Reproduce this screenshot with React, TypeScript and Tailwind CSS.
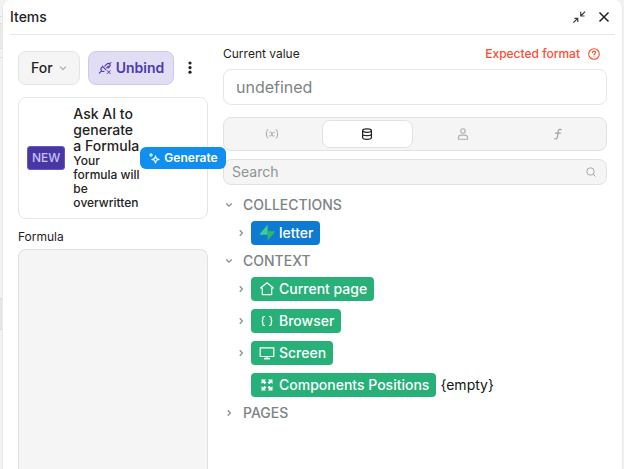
import type { ReactNode } from "react";

function Chevron({ open = false }: { open?: boolean }) {
  return (
    <svg viewBox="0 0 8 8" className="size-2 shrink-0" fill="none" stroke="#8b9292" strokeWidth="1.3">
      <path d={open ? "M1.2 2.6 4 5.2l2.8-2.6" : "M2.8 1.2 5.4 4 2.8 6.8"} />
    </svg>
  );
}

function UnplugIcon() {
  return (
    <svg viewBox="0 0 14 14" className="size-3.5" fill="none" stroke="#4d3aae" strokeWidth="1.1" strokeLinecap="round" strokeLinejoin="round">
      <path d="M1.300 12.200 3.600 9.800M6 10.200c-.9.500-1.700.3-2.400-.4-.9-.9-.9-2.200 0-3.100l1.200-1.100M4.300 5.100l3.500 3.500M6.800 5.200l1.700-1.800M8.700 7l1.700-1.800M7.800 4.100l1-1c.8-.8 2-.9 2.800-.1s.7 2-.1 2.800l-1 1M11.700 2.900l1.200-1.400" />
      <path d="m9.200 9.600 3 3m0-3-3 3" strokeWidth="1" />
    </svg>
  );
}

function SparkIcon() {
  return (
    <svg viewBox="0 0 12 12" className="size-3" fill="none" stroke="#fff" strokeWidth="1.1" strokeLinejoin="round">
      <path d="M7.500 3.800 8.400 6.500l2.700.9-2.700.9-.9 2.800-.9-2.800-2.700-.9 2.700-.9zM3 1v4M1 3h4" />
    </svg>
  );
}

function BoltIcon() {
  return (
    <svg viewBox="0 0 14 14" className="size-4">
      <path d="M8.300.7v4.800H13c.6 0 .8.6.5 1L7.600 13.500V8.600z" fill="#249361" />
      <path d="M7.600.5v8.100H1.300c-.6 0-.8-.6-.5-1L6.700.6c.3-.4.9-.5.9-.1z" fill="#3ecf8e" />
      <path d="M7.600 5.500H13c.6 0 .8.6.5 1L7.600 13.500z" fill="#2fb577" />
    </svg>
  );
}

function HomeIcon() {
  return (
    <svg viewBox="0 0 16 16" className="size-4" fill="none" stroke="#fff" strokeWidth="1.2" strokeLinejoin="round">
      <path d="M8 1.800 14.400 7h-1.700v6.600H3.300V7H1.600z" />
    </svg>
  );
}

function BracesIcon() {
  return (
    <svg viewBox="0 0 16 16" className="size-4" fill="none" stroke="#fff" strokeWidth="1.2" strokeLinecap="round">
      <path d="M5.500 3.500c-1.300 0-1.700.5-1.700 1.600v1.300c0 .9-.4 1.600-1.200 1.600.8 0 1.200.7 1.200 1.600v1.300c0 1.100.4 1.600 1.700 1.600M10.500 3.500c1.300 0 1.700.5 1.700 1.600v1.300c0 .9.4 1.600 1.200 1.600-.8 0-1.200.7-1.200 1.600v1.300c0 1.100-.4 1.600-1.700 1.600" />
    </svg>
  );
}

function ScreenIcon() {
  return (
    <svg viewBox="0 0 16 16" className="size-4" fill="none" stroke="#fff" strokeWidth="1.200">
      <path d="M1.200 2.800h13.600v8.700H1.200zM8 11.500v2" />
      <path d="M5 13.600h6" strokeWidth="1.600" />
    </svg>
  );
}

function ExpandIcon() {
  return (
    <svg viewBox="0 0 16 16" className="size-4" fill="#fff">
      <path d="M2.500 2.500h4.500L5.700 3.800l1.700 1.700-1.700 1.700-1.800-1.800L2.500 7zM13.500 2.500H9l1.300 1.300-1.700 1.700 1.700 1.700 1.800-1.800L13.500 7zM2.500 13.500H7l-1.300-1.300 1.700-1.700-1.700-1.700-1.800 1.800L2.500 9zM13.500 13.500H9l1.300-1.300-1.700-1.700 1.700-1.700 1.800 1.800L13.500 9z" />
    </svg>
  );
}

function DatabaseIcon() {
  return (
    <svg viewBox="0 0 12 12" className="size-3" fill="none" stroke="#1e2323" strokeWidth="1.200">
      <ellipse cx="6" cy="2.600" rx="4.400" ry="1.800" />
      <path d="M1.600 2.600v6.900c0 .9 2 1.800 4.400 1.800s4.400-.9 4.400-1.800V2.600M1.600 6c0 .9 2 1.600 4.400 1.600s4.400-.7 4.400-1.600" />
    </svg>
  );
}

function UserIcon() {
  return (
    <svg viewBox="0 0 12 12" className="size-3" fill="none" stroke="#aab0b0" strokeWidth="1.100" strokeLinejoin="round">
      <circle cx="6" cy="3" r="2.200" />
      <path d="M1.500 11.200V9.600c0-1.600 1.200-2.500 2.800-2.500h3.400c1.600 0 2.800.9 2.800 2.500v1.600z" />
    </svg>
  );
}

function VariableIcon() {
  return (
    <svg viewBox="0 0 14 12" className="h-3 w-3.5" fill="none" stroke="#9da3a3" strokeWidth="1" strokeLinecap="round">
      <path d="M2.700 1.500C.9 4 .9 7.700 2.700 10.200M11.300 1.500c1.800 2.500 1.800 6.200 0 8.700M4.800 4.200c1-.6 1.700-.2 2 1.200l.4 1.700c.3 1.300 1.100 1.500 2 .8M9.400 4.300c-1-.5-1.700.2-2.300 1.400L6.300 7c-.6 1.200-1.100 1.400-1.800.9" />
    </svg>
  );
}

function FunctionIcon() {
  return (
    <svg viewBox="0 0 12 12" className="size-3" fill="none" stroke="#9da3a3" strokeWidth="1.200" strokeLinecap="round">
      <path d="M9.300 1.600c-1.700-.8-2.900 0-3.100 1.600L5.400 9.200c-.2 1.600-1.400 2.200-2.800 1.500M3.600 5.200h4.800" />
    </svg>
  );
}

const tabs = [
  { label: "Variables", icon: <VariableIcon /> },
  { label: "Data", icon: <DatabaseIcon />, active: true },
  { label: "User", icon: <UserIcon /> },
  { label: "Functions", icon: <FunctionIcon /> },
];

function Section({ name, open = false, children }: { name: string; open?: boolean; children?: ReactNode }) {
  return (
    <li>
      <button type="button" aria-expanded={open} className="flex h-6 items-center gap-2.5 px-0.5 text-sm font-medium text-[#7c8484]">
        <Chevron open={open} />
        {name}
      </button>
      {children && <ul className="flex flex-col gap-2 py-1 pl-3.5">{children}</ul>}
    </li>
  );
}

function Item({ name, icon, color = "bg-[#27b078]", note }: { name: string; icon: ReactNode; color?: string; note?: string }) {
  return (
    <li className="flex h-6 items-center gap-1.5">
      <span className="flex w-2">{!note && <Chevron />}</span>
      <span className="flex items-center gap-1">
        <button type="button" className={`flex h-6 items-center gap-1 rounded pr-[7px] pl-2 text-sm font-medium whitespace-nowrap text-white ${color}`}>
          {icon}
          {name}
        </button>
        {note && <span className="text-sm text-[#111414]">{note}</span>}
      </span>
    </li>
  );
}

export default function App() {
  return (
    <div className="flex h-screen overflow-hidden bg-[#f2f2f2] font-['Inter','Liberation_Sans',sans-serif] text-[#1e2323]">
      <div className="flex w-0.5 shrink-0 flex-col" aria-hidden="true">
        <div className="mt-4 h-2 border-y border-[#dedede]" />
        <div className="h-6 bg-[#e9e9e9]" />
        <div className="h-2.5 border-y border-[#dedede]" />
        <div className="mt-60 h-8 border-y border-[#dadada] bg-[#e6e6e6]" />
      </div>
      <main className="mr-px flex min-w-0 flex-1 flex-col rounded-t-lg border-x border-[#e9e9e9] bg-white px-[7px]">
        <header className="flex h-[35px] shrink-0 items-center justify-between border-b border-[#e5e6e6]">
          <h1 className="text-sm font-medium">Items</h1>
          <div className="flex items-center gap-3 pr-[5px]">
            <button type="button" aria-label="Collapse">
              <svg viewBox="0 0 14 14" className="size-3.5" fill="none" stroke="#3a4040" strokeWidth="1.200">
                <path d="M2.500 8.300h3.300V12M5.800 8.300l-4.400 4.300M12.500 6H8.700V1.800M8.700 6l4.400-4.400" />
              </svg>
            </button>
            <button type="button" aria-label="Close">
              <svg viewBox="0 0 12 12" className="size-3" fill="none" stroke="#1e2323" strokeWidth="1.500">
                <path d="m1.500 1.500 9 9m0-9-9 9" />
              </svg>
            </button>
          </div>
        </header>
        <div className="flex min-h-0 flex-1 gap-[15px] px-2">
          <section className="flex w-[190px] shrink-0 flex-col pt-4">
            <div className="flex shrink-0 items-center gap-2">
              <button type="button" className="flex h-[34px] items-center gap-1.5 rounded-lg border border-[#e3e4e4] bg-[#f5f5f5] px-3 text-sm font-medium">
                For
                <svg viewBox="0 0 8 8" className="size-2" fill="none" stroke="#a5abab" strokeWidth="1.200">
                  <path d="M1 2.600 4 5.400l3-2.800" />
                </svg>
              </button>
              <button type="button" className="flex h-[34px] items-center gap-1 rounded-lg border border-[#cdc8ee] bg-[#e1def3] px-[9px] text-sm font-semibold text-[#4d3aae]">
                <UnplugIcon />
                Unbind
              </button>
              <button type="button" aria-label="More options" className="px-1.5">
                <svg viewBox="0 0 4 14" className="h-3.5 w-1" fill="#1e2323">
                  <circle cx="2" cy="2" r="1.600" />
                  <circle cx="2" cy="6.600" r="1.600" />
                  <circle cx="2" cy="11.200" r="1.600" />
                </svg>
              </button>
            </div>
            <div className="mt-3 flex shrink-0 items-center rounded-lg border border-[#e5e6e6] p-2">
              <span className="mr-2 shrink-0 rounded-[3px] border border-[#6a57c6] bg-[#4737a4] px-1 py-[3px] text-xs leading-4 font-medium text-[#c9c1f3]">NEW</span>
              <div className="w-[67px] shrink-0 font-medium">
                <p className="text-sm leading-4">Ask AI to generate a Formula</p>
                <p className="text-xs leading-3.5">Your formula will be overwritten</p>
              </div>
              <button type="button" className="relative z-10 flex h-[22px] shrink-0 items-center gap-1 rounded-md bg-[#108ff0] px-2 text-xs font-semibold text-white">
                <SparkIcon />
                Generate
              </button>
            </div>
            <label htmlFor="formula" className="mt-2 mb-0.5 shrink-0 text-xs leading-5">Formula</label>
            <textarea id="formula" className="min-h-0 flex-1 resize-none rounded-t-lg border border-b-0 border-[#dfe1e1] bg-[#f5f5f5] p-2 text-sm outline-none" />
          </section>
          <section className="flex min-w-0 flex-1 flex-col pt-2.5">
            <div className="flex h-[18px] items-center justify-between text-xs">
              <label htmlFor="current">Current value</label>
              <button type="button" className="flex items-center gap-2 pr-[7px] font-medium text-[#f94d32]">
                Expected format
                <svg viewBox="0 0 12 12" className="size-3" fill="none" stroke="#f94d32" strokeWidth="1.100" strokeLinecap="round">
                  <circle cx="6" cy="6" r="5.300" />
                  <path d="M4.500 4.700c0-2.100 3.100-2 3.100-.1C7.600 5.800 6 5.700 6 7M6 8.700v.1" />
                </svg>
              </button>
            </div>
            <input id="current" readOnly value="undefined" className="mt-1.5 h-9 w-full rounded-lg border border-[#e5e6e6] px-3 text-base text-[#7c8484] outline-none" />
            <div role="tablist" className="mt-3 grid h-[34px] grid-cols-4 gap-1 rounded-lg border border-[#e0e2e2] bg-[#f5f5f5] p-0.5">
              {tabs.map((tab) => (
                <button
                  key={tab.label}
                  type="button"
                  role="tab"
                  aria-label={tab.label}
                  aria-selected={!!tab.active}
                  className={`flex items-center justify-center rounded-lg ${tab.active ? "border border-[#e0e2e2] bg-white" : ""}`}
                >
                  {tab.icon}
                </button>
              ))}
            </div>
            <div className="mt-2 flex h-[26px] items-center rounded-lg border border-[#e0e2e2] bg-[#f5f5f5] pr-2.5 pl-2">
              <input type="search" aria-label="Search" placeholder="Search" className="min-w-0 flex-1 bg-transparent text-sm outline-none placeholder:text-[#8d9494]" />
              <svg viewBox="0 0 10 10" className="size-2.5" fill="none" stroke="#a1a7a7" strokeWidth="1">
                <circle cx="4.500" cy="4.500" r="3.700" />
                <path d="m7.200 7.200 2.300 2.300" />
              </svg>
            </div>
            <ul className="mt-2">
              <Section name="COLLECTIONS" open>
                <Item name="letter" icon={<BoltIcon />} color="bg-[#0f7bd0]" />
              </Section>
              <Section name="CONTEXT" open>
                <Item name="Current page" icon={<HomeIcon />} />
                <Item name="Browser" icon={<BracesIcon />} />
                <Item name="Screen" icon={<ScreenIcon />} />
                <Item name="Components Positions" icon={<ExpandIcon />} note="{empty}" />
              </Section>
              <Section name="PAGES" />
            </ul>
          </section>
        </div>
      </main>
    </div>
  );
}
